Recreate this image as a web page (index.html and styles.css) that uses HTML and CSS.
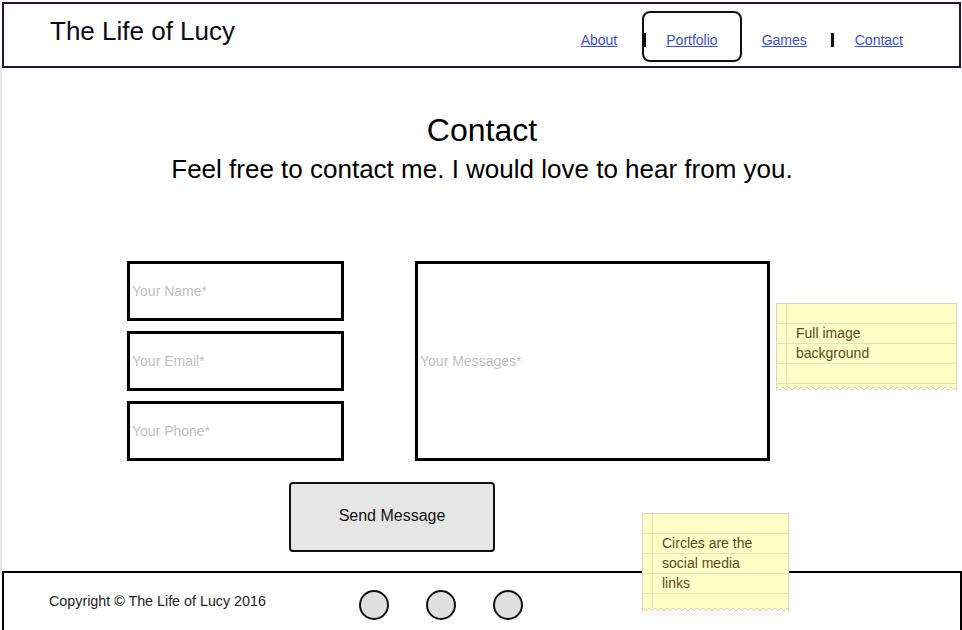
FILE: index.html
```html
<!DOCTYPE html>
<html lang="en">
<head>
<meta charset="utf-8">
<title>The Life of Lucy - Contact</title>
<link rel="stylesheet" href="styles.css">
</head>
<body>
<div class="page">
  <header class="site-header">
    <div class="brand">The Life of Lucy</div>
    <nav class="nav">
      <a class="nav-link about" href="#">About</a>
      <span class="sep sep-1"></span>
      <a class="nav-link portfolio" href="#">Portfolio</a>
      <a class="nav-link games" href="#">Games</a>
      <span class="sep sep-2"></span>
      <a class="nav-link contact" href="#">Contact</a>
    </nav>
  </header>

  <main class="main">
    <h1 class="title">Contact</h1>
    <p class="subtitle">Feel free to contact me. I would love to hear from you.</p>

    <form class="form">
      <div class="fields">
        <div class="field"><span class="ph">Your Name*</span></div>
        <div class="field"><span class="ph">Your Email*</span></div>
        <div class="field"><span class="ph">Your Phone*</span></div>
      </div>
      <div class="message"><span class="ph">Your Messages*</span></div>
    </form>
    <div class="actions">
      <button class="send" type="button">Send Message</button>
    </div>
  </main>

  <footer class="footer">
    <div class="copy">Copyright © The Life of Lucy 2016</div>
    <div class="social">
      <span class="circle"></span>
      <span class="circle"></span>
      <span class="circle"></span>
    </div>
  </footer>

  <div class="note note-bg">
    <div class="note-text">Full image<br>background</div>
    <svg class="zig" width="100%" height="5" preserveAspectRatio="none">
      <defs>
        <pattern id="zz1" width="6" height="5" patternUnits="userSpaceOnUse">
          <path d="M0 0 L0 1 L3 4 L6 1 L6 0 Z" fill="#ffffc8"/>
          <path d="M0 1 L3 4 L6 1" fill="none" stroke="#d6d2ae" stroke-width="1"/>
        </pattern>
      </defs>
      <rect width="100%" height="5" fill="url(#zz1)"/>
    </svg>
  </div>

  <div class="note note-social">
    <div class="note-text">Circles are the<br>social media<br>links</div>
    <svg class="zig" width="100%" height="5" preserveAspectRatio="none">
      <defs>
        <pattern id="zz2" width="6" height="5" patternUnits="userSpaceOnUse">
          <path d="M0 0 L0 1 L3 4 L6 1 L6 0 Z" fill="#ffffc8"/>
          <path d="M0 1 L3 4 L6 1" fill="none" stroke="#d6d2ae" stroke-width="1"/>
        </pattern>
      </defs>
      <rect width="100%" height="5" fill="url(#zz2)"/>
    </svg>
  </div>
</div>
</body>
</html>
```

FILE: styles.css
```css
* { box-sizing: border-box; }

html, body {
  margin: 0;
  padding: 0;
  background: #ffffff;
  font-family: "Liberation Sans", Arial, sans-serif;
  color: #111;
}

.page {
  position: relative;
  width: 962px;
  height: 630px;
  overflow: hidden;
  padding-top: 2px;
}

/* Header */
.site-header {
  margin-left: 2px;
  width: 959px;
  height: 66px;
  border: 2px solid #2a1238;
  display: flex;
  align-items: flex-start;
}

.brand {
  margin-left: 46px;
  margin-top: 12px;
  font-size: 26px;
  line-height: 30px;
  color: #0c0c18;
}

.nav {
  display: flex;
  align-items: center;
  margin-top: 28px;
  margin-left: auto;
  margin-right: 56px;
  height: 16px;
}

.nav-link {
  font-size: 14px;
  line-height: 16px;
  color: #3b4fd4;
  text-decoration: underline;
}

.sep {
  display: block;
  width: 3px;
  height: 14px;
  background: #111;
}

.sep-1 { margin-left: 26px; }
.portfolio { margin-left: 20px; position: relative; }
.portfolio::before {
  content: "";
  position: absolute;
  left: -24px;
  top: -21px;
  width: 96px;
  height: 47px;
  border: 2px solid #111;
  border-radius: 8px;
}
.games { margin-left: 44px; }
.sep-2 { margin-left: 24px; }
.contact { margin-left: 21px; }

/* Main */
.main {
  height: 503px;
  border-left: 2px solid #e6e6e6;
  padding-top: 44px;
}

.title {
  margin: 0;
  text-align: center;
  font-size: 32px;
  line-height: 36px;
  font-weight: normal;
  color: #000;
}

.subtitle {
  margin: 6px 0 0;
  text-align: center;
  font-size: 26px;
  line-height: 30px;
  color: #000;
}

.form {
  display: flex;
  margin: 77px 0 0 125px;
  gap: 71px;
}

.fields {
  display: flex;
  flex-direction: column;
  gap: 10px;
}

.field {
  width: 217px;
  height: 60px;
  border: 3px solid #000;
  display: flex;
  align-items: center;
  padding-left: 2px;
}

.message {
  width: 355px;
  height: 200px;
  border: 3px solid #000;
  display: flex;
  align-items: center;
  padding-left: 2px;
}

.ph {
  font-size: 14px;
  color: #bfbfbf;
}

.actions {
  margin: 21px 0 0 287px;
}

.send {
  width: 206px;
  height: 70px;
  border: 2px solid #111;
  border-radius: 4px;
  background: #e6e6e6;
  font-family: "Liberation Sans", Arial, sans-serif;
  font-size: 16px;
  color: #111;
  padding: 0 0 2px;
}

/* Footer */
.footer {
  margin-left: 2px;
  width: 960px;
  height: 80px;
  border: 2px solid #000;
  display: flex;
  align-items: flex-start;
}

.copy {
  margin-left: 45px;
  margin-top: 19px;
  font-size: 14.3px;
  line-height: 18px;
  color: #222;
}

.social {
  display: flex;
  gap: 37px;
  margin-left: 93px;
  margin-top: 17px;
}

.circle {
  display: block;
  width: 30px;
  height: 30px;
  border-radius: 50%;
  border: 2px solid #111;
  background: #e0e0e0;
}

/* Sticky notes (annotations) */
.note {
  position: absolute;
  border: 1px solid #d8d6bc;
  border-bottom: none;
  background:
    linear-gradient(90deg, transparent 9px, #e9e4b4 9px, #e9e4b4 10px, transparent 10px),
    repeating-linear-gradient(180deg, #ffffc8 0 19px, #e6e2b6 19px 20px);
  background-size: 100% calc(100% - 5px);
  background-repeat: no-repeat;
  padding: 19px 0 0 19px;
}

.note-text {
  font-size: 14px;
  line-height: 20px;
  color: #5a4a1e;
}

.zig {
  position: absolute;
  left: 0;
  bottom: 0;
  display: block;
}

.note-bg {
  left: 776px;
  top: 303px;
  width: 181px;
  height: 88px;
}

.note-social {
  left: 642px;
  top: 513px;
  width: 147px;
  height: 99px;
}
```
